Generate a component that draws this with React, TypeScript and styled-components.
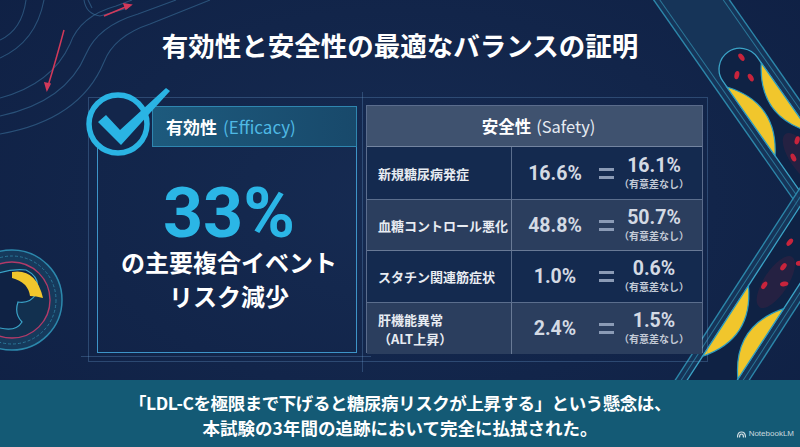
import React from 'react';
import styled, { createGlobalStyle } from 'styled-components';

const GlobalStyle = createGlobalStyle`
  html, body {
    margin: 0;
    padding: 0;
    background: #12254a;
  }
  body {
    font-family: "Noto Sans CJK JP", "Noto Sans", sans-serif;
  }
  * {
    box-sizing: border-box;
  }
`;

const Page = styled.div`
  position: relative;
  width: 800px;
  height: 447px;
  overflow: hidden;
  display: flex;
  flex-direction: column;
  color: #fff;
  background: radial-gradient(ellipse at 50% 45%, #162b52 0%, #12254a 55%, #0f2044 100%);
`;

const Backdrop = styled.svg`
  position: absolute;
  inset: 0;
  width: 800px;
  height: 447px;
  pointer-events: none;
`;

const Title = styled.h1`
  position: relative;
  margin: 0;
  padding-top: 28px;
  height: 97px;
  text-align: center;
  font-size: 26.5px;
  line-height: 34px;
  font-weight: 700;
`;

const Frame = styled.div`
  position: relative;
  margin-left: 88px;
  width: 620px;
  height: 265px;
  padding: 7px 4px 8px 8px;
  border: 1px solid rgba(110, 160, 210, 0.3);
  display: flex;
  gap: 9px;

  &::before {
    content: '';
    position: absolute;
    left: -8px;
    top: 258px;
    width: 290px;
    height: 1px;
    background: rgba(110, 160, 210, 0.3);
  }

  &::after {
    content: '';
    position: absolute;
    left: 273px;
    top: -6px;
    width: 1px;
    height: 280px;
    background: rgba(110, 160, 210, 0.3);
  }
`;

/* ---------- efficacy ---------- */

const EfficacyPanel = styled.section`
  position: relative;
  width: 260px;
  display: flex;
  flex-direction: column;
`;

const CheckBadge = styled.svg`
  position: absolute;
  left: -12px;
  top: -18px;
  width: 88px;
  height: 76px;
  z-index: 2;
`;

const EfficacyHeader = styled.div`
  margin: 1px 0 0 55px;
  height: 41px;
  display: flex;
  align-items: center;
  gap: 6px;
  padding-left: 13px;
  background: linear-gradient(90deg, #1d5a7d 0%, #18496b 100%);
  border: 1px solid #2f86b0;
  font-size: 17px;
  font-weight: 700;
`;

const Sub = styled.span<{ $tone?: string }>`
  font-weight: 400;
  color: ${p => p.$tone || '#e6ebf2'};
`;

const EfficacyBox = styled.div`
  flex: 1;
  border: 1.5px solid #3d94c8;
  border-top: none;
  display: flex;
  flex-direction: column;
  align-items: center;
  justify-content: center;
  padding: 0 0 6px 4px;
`;

const BigNumber = styled.div`
  font-family: Roboto, "Noto Sans", sans-serif;
  font-size: 70px;
  line-height: 64px;
  font-weight: 700;
  color: #2bb6e6;
`;

const BigCaption = styled.div`
  font-size: 24px;
  line-height: 34px;
  font-weight: 700;
  text-align: center;
`;

/* ---------- safety ---------- */

const SafetyTable = styled.section`
  flex: 1;
  display: grid;
  grid-template-columns: 145px 1fr;
  grid-template-rows: 41px 53px 51px 52px 51px;
  border: 1px solid rgba(190, 205, 228, 0.42);
`;

const SafetyHeader = styled.div`
  grid-column: 1 / -1;
  display: flex;
  align-items: center;
  justify-content: center;
  gap: 5px;
  padding-left: 8px;
  background: #3f526f;
  border-bottom: 1px solid rgba(190, 205, 228, 0.42);
  font-size: 16.5px;
  font-weight: 700;
`;

const ItemCell = styled.div<{ $light: boolean; $last?: boolean }>`
  display: flex;
  align-items: center;
  padding-left: 11px;
  background: ${p => (p.$light ? '#2b3e5e' : '#142a4f')};
  border-right: 1px solid rgba(190, 205, 228, 0.42);
  border-bottom: ${p => (p.$last ? 'none' : '1px solid rgba(190, 205, 228, 0.42)')};
  font-size: 13px;
  line-height: 19px;
  font-weight: 700;
  color: #e8ecf2;
`;

const ValueCell = styled.div<{ $light: boolean; $last?: boolean }>`
  display: grid;
  grid-template-columns: 86px 16px 1fr;
  align-items: center;
  justify-items: center;
  padding-right: 8px;
  background: ${p => (p.$light ? '#2b3e5e' : '#142a4f')};
  border-bottom: ${p => (p.$last ? 'none' : '1px solid rgba(190, 205, 228, 0.42)')};
`;

const Value = styled.span`
  font-family: Roboto, "Noto Sans", sans-serif;
  font-size: 19.5px;
  line-height: 23px;
  font-weight: 700;
  color: #d4dae4;
`;

const EqualSign = styled.span`
  width: 15px;
  height: 11px;
  border-top: 3.5px solid #8b9bb6;
  border-bottom: 3.5px solid #8b9bb6;
`;

const Compared = styled.div`
  display: flex;
  flex-direction: column;
  align-items: center;
  padding-bottom: 2px;
`;

const Note = styled.span`
  font-size: 10px;
  line-height: 15px;
  margin-top: -1px;
  font-weight: 700;
  color: #c3cad6;
`;

/* ---------- banner ---------- */

const Banner = styled.footer`
  position: relative;
  margin-top: auto;
  height: 67px;
  padding-top: 3px;
  display: flex;
  flex-direction: column;
  align-items: center;
  justify-content: center;
  background: #145a75;
  font-size: 17.5px;
  line-height: 25px;
  font-weight: 700;
`;

const BannerLine = styled.div<{ $tight?: boolean }>`
  letter-spacing: ${p => (p.$tight ? '-0.45px' : '0')};
`;

const Watermark = styled.div`
  position: absolute;
  right: 6px;
  bottom: 8px;
  display: flex;
  align-items: center;
  gap: 3px;
  font-family: "Liberation Sans", Arial, sans-serif;
  font-size: 8px;
  font-weight: 400;
  line-height: 10px;
  color: rgba(255, 255, 255, 0.78);
`;

const rows = [
  { label: <>新規糖尿病発症</>, a: '16.6%', b: '16.1%' },
  { label: <>血糖コントロール悪化</>, a: '48.8%', b: '50.7%' },
  { label: <>スタチン関連筋症状</>, a: '1.0%', b: '0.6%' },
  { label: <>肝機能異常<br />（ALT上昇）</>, a: '2.4%', b: '1.5%' },
];

type VesselProps = {
  x: number;
  y: number;
  angle: number;
  start: number;
  plaque: number;
  cells: [number, number][];
};

// artery segment drawn along its local x axis, walls at ±21
function Vessel({ x, y, angle, start, plaque, cells }: VesselProps) {
  const p0 = plaque - 42;
  const p1 = plaque + 42;
  return (
    <g transform={`translate(${x} ${y}) rotate(${angle})`}>
      <rect x={-200} y={-31} width={500} height={62} fill="#17375c" opacity={0.85} />
      <line x1={-200} y1={-31} x2={300} y2={-31} stroke="#2c87aa" strokeWidth={1.4} />
      <line x1={-200} y1={31} x2={300} y2={31} stroke="#2c87aa" strokeWidth={1.4} />
      <line x1={-200} y1={-26} x2={300} y2={-26} stroke="#2a7698" strokeWidth={1} />
      <line x1={-200} y1={26} x2={300} y2={26} stroke="#2a7698" strokeWidth={1} />
      <rect x={start} y={-21} width={300 - start} height={42} rx={21} fill="#0f2244" stroke="#3ba3c6" strokeWidth={1.3} />
      <path d={`M${p0} -21 Q ${plaque} 12 ${p1} -21 Z`} fill="#f1c62c" stroke="#2c9cc0" strokeWidth={1.2} />
      <path d={`M${p0} 21 Q ${plaque} -12 ${p1} 21 Z`} fill="#f1c62c" stroke="#2c9cc0" strokeWidth={1.2} />
      <ellipse cx={plaque + 60} cy={0} rx={30} ry={12} fill="#c8243c" opacity={0.12} />
      {cells.map(([cx, cy], i) => (
        <ellipse key={i} cx={cx} cy={cy} rx={4.2} ry={2.4} fill="#c8243c" transform={`rotate(${(i * 47) % 90} ${cx} ${cy})`} />
      ))}
    </g>
  );
}

export default function App() {
  return (
    <Page>
      <GlobalStyle />
      <Backdrop viewBox="0 0 800 447">
        {/* top-left vessels */}
        <g fill="none" stroke="#3a709a" strokeOpacity={0.6} strokeWidth={1.1}>
          <path d="M0 40 Q 22 30 26 0" />
          <path d="M0 58 Q 36 42 44 0" />
          <path d="M0 98 Q 52 84 70 44 Q 80 16 116 6 L 132 0" />
          <path d="M0 116 Q 66 102 86 54 Q 98 26 138 14 L 176 0" />
          <path d="M0 134 Q 80 120 104 62 Q 114 36 150 24 L 210 0" />
          <path d="M84 0 Q 86 14 100 16 L 128 8" />
          <path d="M88 0 L 92 8" />
        </g>
        <g stroke="#d2395a" strokeWidth={1.5} fill="#d2395a">
          <path d="M104 16 L 128 6" fill="none" />
          <path d="M131 5 l -7 -1 l 2 5 z" />
          <path d="M64 30 Q 56 60 48 86" fill="none" />
          <path d="M47 90 l -2 -7 l 5 1 z" />
        </g>

        {/* left cross-section */}
        <g transform="translate(12 300)">
          <circle r={50} fill="#163a5c" stroke="#2c88ac" strokeWidth={1.5} />
          <circle r={44} fill="none" stroke="#2a7698" strokeWidth={1} strokeDasharray="3 2" />
          <circle r={38} fill="#12304f" stroke="#b23a68" strokeWidth={1.4} />
          <path d="M-30 -20 Q -8 -32 14 -30 Q 30 -22 24 -6 Q 18 4 6 2 Q 2 14 10 22 Q 4 32 -12 28 Q -30 24 -32 4 Z" fill="#0f2244" stroke="#3aa3c8" strokeWidth={1.2} />
          <path d="M0 -28 Q 24 -32 31 -2 Q 24 -4 18 -4 Q 16 -18 0 -22 Z" fill="#f1c62c" />
        </g>

        {/* right vessels */}
        <Vessel
          x={728}
          y={52}
          angle={55}
          start={0}
          plaque={70}
          cells={[[12, -8], [24, 6], [34, -4], [112, -6], [124, 7], [138, -2]]}
        />
        <Vessel
          x={735}
          y={345}
          angle={-57}
          start={-200}
          plaque={15}
          cells={[[66, -8], [78, 8], [92, -2], [104, 10], [116, -10], [130, 3]]}
        />
      </Backdrop>

      <Title>有効性と安全性の最適なバランスの証明</Title>

      <Frame>
        <EfficacyPanel>
          <CheckBadge viewBox="0 0 88 76">
            <circle cx={33} cy={37} r={29} fill="#13264b" stroke="#2ab4e4" strokeWidth={5.5} />
            <path d="M13 35 L 21 28 L 35 43 L 81 1 L 85 4 L 36 58 Z" fill="#2ab4e4" />
          </CheckBadge>
          <EfficacyHeader>
            有効性 <Sub $tone="#4fb9e4">(Efficacy)</Sub>
          </EfficacyHeader>
          <EfficacyBox>
            <BigNumber>33%</BigNumber>
            <BigCaption>
              の主要複合イベント
              <br />
              リスク減少
            </BigCaption>
          </EfficacyBox>
        </EfficacyPanel>

        <SafetyTable>
          <SafetyHeader>
            安全性 <Sub>(Safety)</Sub>
          </SafetyHeader>
          {rows.map((r, i) => (
            <React.Fragment key={i}>
              <ItemCell $light={i % 2 === 1} $last={i === rows.length - 1}>
                <span>{r.label}</span>
              </ItemCell>
              <ValueCell $light={i % 2 === 1} $last={i === rows.length - 1}>
                <Value>{r.a}</Value>
                <EqualSign />
                <Compared>
                  <Value>{r.b}</Value>
                  <Note>（有意差なし）</Note>
                </Compared>
              </ValueCell>
            </React.Fragment>
          ))}
        </SafetyTable>
      </Frame>

      <Banner>
        <BannerLine $tight>「LDL-Cを極限まで下げると糖尿病リスクが上昇する」という懸念は、</BannerLine>
        <BannerLine>本試験の3年間の追跡において完全に払拭された。</BannerLine>
        <Watermark>
          <svg width="9" height="7" viewBox="0 0 9 7">
            <path d="M0.5 6.5 Q 0.5 1 4.5 1 Q 8.5 1 8.5 6.5" fill="none" stroke="rgba(255,255,255,0.8)" strokeWidth="1.2" />
            <path d="M2.5 6.5 Q 2.5 3 4.5 3 Q 6.5 3 6.5 6.5" fill="none" stroke="rgba(255,255,255,0.8)" strokeWidth="1.2" />
          </svg>
          NotebookLM
        </Watermark>
      </Banner>
    </Page>
  );
}
